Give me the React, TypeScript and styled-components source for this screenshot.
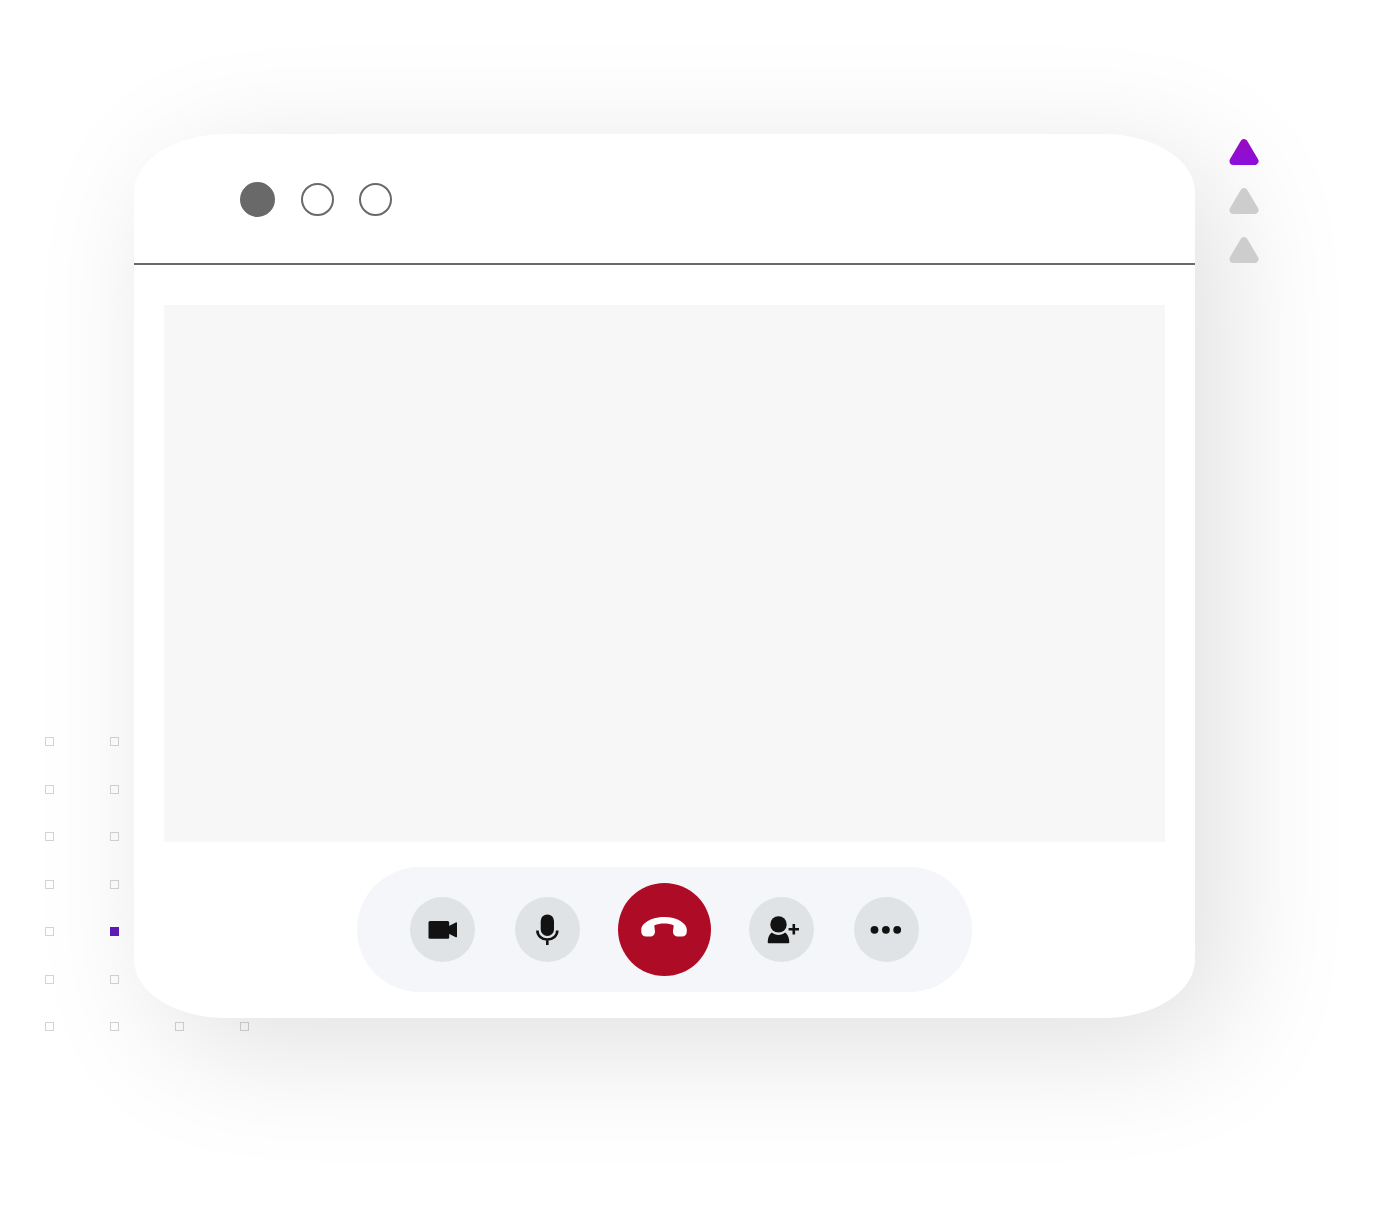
import React from "react";
import styled, { createGlobalStyle } from "styled-components";

const GlobalStyle = createGlobalStyle`
  *, *::before, *::after { box-sizing: border-box; }
  body {
    margin: 0;
    background: #ffffff;
    font-family: "Liberation Sans", Arial, sans-serif;
    overflow-x: hidden;
  }
`;

const Page = styled.main`
  display: flex;
  align-items: flex-start;
  gap: 34px;
  padding: 134px 128px 192px 134px;
`;

const Stage = styled.section`
  position: relative;
  flex: 1;
  min-width: 0;
`;

const SquarePattern = styled.div`
  position: absolute;
  left: -89px;
  bottom: -13px;
  height: 294px;
  display: grid;
  grid-template-columns: repeat(4, 9px);
  grid-auto-rows: 9px;
  column-gap: 56px;
  align-content: space-between;
`;

const Square = styled.span<{ $filled: boolean }>`
  border: 1px solid ${(p) => (p.$filled ? "#5f1cba" : "rgba(0, 0, 0, 0.17)")};
  background: ${(p) => (p.$filled ? "#5f1cba" : "transparent")};
`;

const Window = styled.article`
  position: relative;
  display: flex;
  flex-direction: column;
  padding-bottom: 26px;
  border-radius: 92px / 58px;
  background: #ffffff;
  box-shadow: 28px 28px 128px rgba(0, 0, 0, 0.125);
`;

const TitleBar = styled.header`
  display: grid;
  grid-template-columns: 36px 33px 33px;
  column-gap: 25px;
  align-items: center;
  padding: 48px 106px 46px;
  border-bottom: 2px solid #696969;
`;

const WindowDot = styled.span<{ $active?: boolean }>`
  width: ${(p) => (p.$active ? 35 : 33)}px;
  height: ${(p) => (p.$active ? 35 : 33)}px;
  border: 2px solid #696969;
  border-radius: 50%;
  background: ${(p) => (p.$active ? "#696969" : "transparent")};
`;

const Video = styled.div`
  margin: 40px 30px 25px;
  aspect-ratio: 1001 / 537;
  background: #f7f7f7;
`;

const CallBar = styled.nav`
  display: flex;
  align-items: center;
  align-self: center;
  gap: 38px;
  height: 125px;
  padding: 0 53px;
  border-radius: 63px;
  background: #f4f6fa;
`;

const ButtonPair = styled.div`
  display: flex;
  gap: 40px;
`;

const RoundButton = styled.button`
  display: block;
  width: 65px;
  height: 65px;
  padding: 0;
  border: 0;
  border-radius: 50%;
  background: #dfe3e5;
  color: #121212;
  cursor: pointer;

  svg {
    display: block;
    width: 100%;
    height: 100%;
  }
`;

const HangUpButton = styled(RoundButton)`
  width: 93px;
  height: 93px;
  background: #ae0c26;
  color: #ffffff;
`;

const Markers = styled.aside`
  display: flex;
  flex-direction: column;
  gap: 23px;
  padding-top: 5px;
  position: relative;

  svg {
    display: block;
  }
`;

const CameraIcon = () => (
  <svg viewBox="0 0 65 65" fill="currentColor" aria-hidden="true">
    <rect x="18.5" y="24" width="20.7" height="17.7" rx="1.5" />
    <path d="M38.8 28.9 L45.8 25.4 Q47 24.9 47 26.1 V39.5 Q47 40.7 45.8 40.2 L38.8 36.7 Z" />
  </svg>
);

const MicIcon = () => (
  <svg viewBox="0 0 65 65" aria-hidden="true">
    <rect x="25.7" y="17.4" width="13.3" height="21.6" rx="6.6" fill="currentColor" />
    <path
      d="M22.4 33.6 C22.4 38.8 26.6 42.5 32.3 42.5 S42.3 38.8 42.3 33.6 M32.3 42.5 V48"
      fill="none"
      stroke="currentColor"
      strokeWidth="2.6"
    />
  </svg>
);

const HangUpIcon = () => (
  <svg viewBox="0 0 93 93" fill="currentColor" aria-hidden="true">
    <path d="M23.3 46.5 C23.3 40.5 33 34 46.2 34 S68.8 40.5 68.8 46.5 V48.6 C68.8 52 66.8 53.6 64 53.6 H60.4 C57 53.6 55 51.6 55 48.6 C55 46.2 55.8 44.8 55.6 42.3 C50.5 40 42 40 36.4 42.3 C36.2 44.8 37 46.2 37 48.6 C37 51.6 35 53.6 32 53.6 H28.2 C25.2 53.6 23.3 52 23.3 48.6 Z" />
  </svg>
);

const AddUserIcon = () => (
  <svg viewBox="0 0 65 65" fill="currentColor" aria-hidden="true">
    <circle cx="29.5" cy="27.4" r="8.2" />
    <path d="M22.9 35.6 C26.2 38.9 32.8 38.9 36.1 35.6 C38.6 37.2 40.3 41 40.3 45.2 Q40.3 46.2 39.3 46.2 H19.7 Q18.7 46.2 18.7 45.2 C18.7 41 20.4 37.2 22.9 35.6 Z" />
    <path d="M44.8 27 V37.4 M39.6 32.2 H50" stroke="currentColor" strokeWidth="2.6" />
  </svg>
);

const MoreIcon = () => (
  <svg viewBox="0 0 65 65" fill="currentColor" aria-hidden="true">
    <circle cx="20.5" cy="32.8" r="3.9" />
    <circle cx="31.9" cy="32.8" r="3.9" />
    <circle cx="43.2" cy="32.8" r="3.9" />
  </svg>
);

const Triangle = ({ fill }: { fill: string }) => (
  <svg width="30" height="26" viewBox="0 0 30 26" aria-hidden="true">
    <defs>
      <linearGradient id="violet" gradientUnits="userSpaceOnUse" x1="0" y1="0" x2="0" y2="26">
        <stop offset="0" stopColor="#980bc0" />
        <stop offset="1" stopColor="#8b0fdc" />
      </linearGradient>
    </defs>
    <path d="M15 4.3 L25.5 22 H4.5 Z" fill={fill} stroke={fill} strokeWidth="8" strokeLinejoin="round" />
  </svg>
);

const SQUARE_COUNT = 28;
const FILLED_SQUARE = 17;

export default function App() {
  return (
    <>
      <GlobalStyle />
      <Page>
        <Stage>
          <SquarePattern aria-hidden="true">
            {Array.from({ length: SQUARE_COUNT }, (_, i) => (
              <Square key={i} $filled={i === FILLED_SQUARE} />
            ))}
          </SquarePattern>
          <Window>
            <TitleBar>
              <WindowDot $active />
              <WindowDot />
              <WindowDot />
            </TitleBar>
            <Video />
            <CallBar>
              <ButtonPair>
                <RoundButton type="button" aria-label="Camera">
                  <CameraIcon />
                </RoundButton>
                <RoundButton type="button" aria-label="Microphone">
                  <MicIcon />
                </RoundButton>
              </ButtonPair>
              <HangUpButton type="button" aria-label="Hang up">
                <HangUpIcon />
              </HangUpButton>
              <ButtonPair>
                <RoundButton type="button" aria-label="Add participant">
                  <AddUserIcon />
                </RoundButton>
                <RoundButton type="button" aria-label="More options">
                  <MoreIcon />
                </RoundButton>
              </ButtonPair>
            </CallBar>
          </Window>
        </Stage>
        <Markers>
          <Triangle fill="url(#violet)" />
          <Triangle fill="#cdcdcd" />
          <Triangle fill="#cdcdcd" />
        </Markers>
      </Page>
    </>
  );
}
